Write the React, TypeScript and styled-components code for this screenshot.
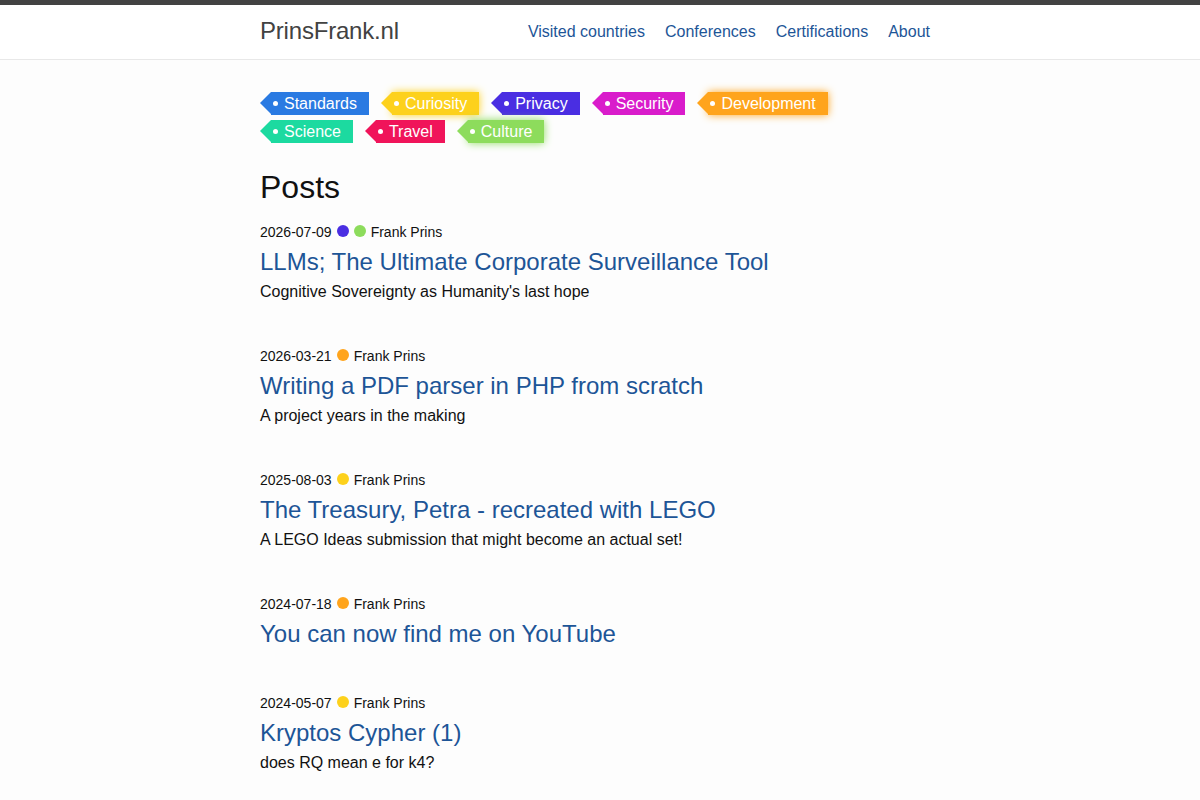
import styled, { createGlobalStyle } from 'styled-components'

const GlobalStyle = createGlobalStyle`
  html, body {
    margin: 0;
    padding: 0;
    background: #fdfdfd;
    font-family: "Liberation Sans", Arial, sans-serif;
    color: #111;
  }
  * { box-sizing: border-box; }
`

const tags = [
  { name: 'Standards', color: '#2a7ae2' },
  { name: 'Curiosity', color: '#fdd11c', glow: true },
  { name: 'Privacy', color: '#4a2ee2' },
  { name: 'Security', color: '#d91ccb' },
  { name: 'Development', color: '#ffa41c', glow: true },
  { name: 'Science', color: '#1cdaa0' },
  { name: 'Travel', color: '#f0145a' },
  { name: 'Culture', color: '#8ddc5c', glow: true },
]

const posts = [
  { date: '2026-07-09', dots: ['#4a2ee2', '#8ddc5c'], title: 'LLMs; The Ultimate Corporate Surveillance Tool', excerpt: "Cognitive Sovereignty as Humanity's last hope" },
  { date: '2026-03-21', dots: ['#ffa41c'], title: 'Writing a PDF parser in PHP from scratch', excerpt: 'A project years in the making' },
  { date: '2025-08-03', dots: ['#fdd11c'], title: 'The Treasury, Petra - recreated with LEGO', excerpt: 'A LEGO Ideas submission that might become an actual set!' },
  { date: '2024-07-18', dots: ['#ffa41c'], title: 'You can now find me on YouTube', excerpt: '' },
  { date: '2024-05-07', dots: ['#fdd11c'], title: 'Kryptos Cypher (1)', excerpt: 'does RQ mean e for k4?' },
]

const App = () => {
  return (
    <>
      <GlobalStyle />
      <Header>
        <Wrapper>
          <Logo href="#">PrinsFrank.nl</Logo>
          <Nav>
            <NavLink href="#">Visited countries</NavLink>
            <NavLink href="#">Conferences</NavLink>
            <NavLink href="#">Certifications</NavLink>
            <NavLink href="#">About</NavLink>
          </Nav>
        </Wrapper>
      </Header>
      <Main>
        <Tags>
          {tags.map(t => (
            <Tag key={t.name} $color={t.color} $glow={!!t.glow}>{t.name}</Tag>
          ))}
        </Tags>
        <Heading>Posts</Heading>
        {posts.map(p => (
          <Post key={p.title}>
            <Meta>
              {p.date}
              {p.dots.map((d, i) => <Dot key={i} $color={d} />)}
              <Author>Frank Prins</Author>
            </Meta>
            <PostTitle href="#">{p.title}</PostTitle>
            {p.excerpt && <Excerpt>{p.excerpt}</Excerpt>}
          </Post>
        ))}
      </Main>
    </>
  )
}

export default App

const Header = styled.header`
  border-top: 5px solid #424242;
  border-bottom: 1px solid #e8e8e8;
  background: #fff;
  height: 60px;
`

const Wrapper = styled.div`
  width: 680px;
  margin: 0 auto;
  height: 100%;
  display: flex;
  align-items: center;
  justify-content: space-between;
  padding-right: 10px;
`

const Logo = styled.a`
  font-size: 24px;
  letter-spacing: -0.2px;
  color: #424242;
  text-decoration: none;
  margin-top: -2px;
`

const Nav = styled.nav`
  display: flex;
  gap: 20px;
  margin-top: -1px;
`

const NavLink = styled.a`
  font-size: 16px;
  color: #1d5597;
  text-decoration: none;
`

const Main = styled.main`
  width: 680px;
  margin: 0 auto;
  padding-top: 32px;
`

const Tags = styled.div`
  display: flex;
  flex-wrap: wrap;
  column-gap: 12px;
  row-gap: 5px;
  width: 600px;
`

const Tag = styled.span<{ $color: string; $glow: boolean }>`
  position: relative;
  display: inline-flex;
  align-items: center;
  height: 23px;
  margin-left: 11px;
  padding: 0 12px 0 13px;
  background: ${p => p.$color};
  color: #fff;
  font-size: 16px;
  box-shadow: ${p => (p.$glow ? `0 0 8px ${p.$color}` : 'none')};
  &::before {
    content: '';
    position: absolute;
    left: -11px;
    top: 0;
    border-style: solid;
    border-width: 11.5px 11px 11.5px 0;
    border-color: transparent ${p => p.$color} transparent transparent;
  }
  &::after {
    content: '';
    width: 5px;
    height: 5px;
    border-radius: 50%;
    background: #fff;
    position: absolute;
    left: 2px;
    top: 9px;
  }
`

const Heading = styled.h1`
  font-size: 32px;
  font-weight: 400;
  margin: 24px 0 15px;
  line-height: 40px;
`

const Post = styled.article`
  margin-bottom: 44px;
`

const Meta = styled.div`
  display: flex;
  align-items: center;
  font-size: 14px;
  line-height: 20px;
  color: #111;
`

const Dot = styled.span<{ $color: string }>`
  width: 12px;
  height: 12px;
  border-radius: 50%;
  background: ${p => p.$color};
  margin-left: 5px;
  margin-top: -2px;
`

const Author = styled.span`
  margin-left: 5px;
`

const PostTitle = styled.a`
  display: block;
  font-size: 24px;
  line-height: 30px;
  margin-top: 5px;
  color: #1d5597;
  text-decoration: none;
`

const Excerpt = styled.p`
  margin: 5px 0 0;
  font-size: 16px;
  line-height: 20px;
`
